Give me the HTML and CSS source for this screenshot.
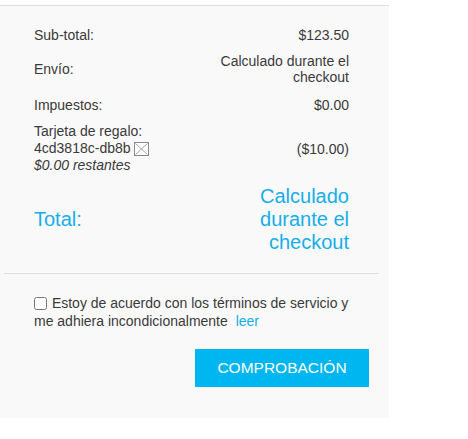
FILE: index.html
```html
<!DOCTYPE html>
<html lang="es">
<head>
<meta charset="utf-8">
<title>Resumen</title>
<link rel="stylesheet" href="styles.css">
</head>
<body>
<div class="panel">
  <div class="summary">
    <div class="row">
      <div class="label">Sub-total:</div>
      <div class="value">$123.50</div>
    </div>
    <div class="row row-tall">
      <div class="label">Envío:</div>
      <div class="value">Calculado durante el checkout</div>
    </div>
    <div class="row">
      <div class="label">Impuestos:</div>
      <div class="value">$0.00</div>
    </div>
    <div class="row">
      <div class="label gift">
        Tarjeta de regalo:<br>
        4cd3818c-db8b <span class="remove"><svg width="15" height="14" viewBox="0 0 15 14"><rect x="0.5" y="0.5" width="14" height="13" fill="#fff" stroke="#8a8a8a"/><path d="M1.5 1.5 L13.5 12.5 M13.5 1.5 L1.5 12.5" stroke="#9a9a9a" stroke-width="0.9" fill="none"/></svg></span><br>
        <em>$0.00 restantes</em>
      </div>
      <div class="value">($10.00)</div>
    </div>
    <div class="row total">
      <div class="label">Total:</div>
      <div class="value">Calculado durante el checkout</div>
    </div>
  </div>
  <hr class="divider">
  <div class="terms">
    <input type="checkbox" class="check" id="agree"> <label for="agree">Estoy de acuerdo con los términos de servicio y me adhiera incondicionalmente</label> <a href="#" class="read">leer</a>
  </div>
  <div class="actions">
    <button class="checkout">COMPROBACIÓN</button>
  </div>
</div>
</body>
</html>
```

FILE: styles.css
```css
html, body {
  margin: 0;
  padding: 0;
  background: #fff;
}
body {
  font-family: "Liberation Sans", Arial, sans-serif;
  font-size: 14px;
  color: #3a3a3a;
  padding-top: 5px;
}
.panel {
  width: 375px;
  background: #f9f9f9;
  border-top: 1px solid #dedede;
  padding: 16px 10px 31px 4px;
}
.summary {
  padding: 0 30px 14px 30px;
}
.row {
  display: flex;
  align-items: center;
  padding: 5px 0;
  line-height: 16px;
}
.row-tall {
  padding-bottom: 7px;
}
.label, .value {
  flex: 1 1 0;
}
.value {
  text-align: right;
}
.gift {
  line-height: 17px;
}
.remove {
  display: inline-block;
  vertical-align: -3px;
  line-height: 0;
}
.total {
  font-size: 20px;
  line-height: 23px;
  color: #16aeea;
  padding-top: 6px;
}
.divider {
  border: 0;
  border-top: 1px solid #dedede;
  margin: 0;
  height: 0;
}
.terms {
  padding: 20px 30px 0 30px;
  line-height: 18px;
}
.check {
  margin: 0 1px 0 0;
  width: 13px;
  height: 13px;
  vertical-align: -2px;
}
.read {
  color: #12aeea;
  text-decoration: none;
  margin-left: 4px;
}
.actions {
  display: flex;
  justify-content: flex-end;
  padding: 19px 10px 0 0;
}
.checkout {
  width: 174px;
  height: 38px;
  border: 0;
  background: #00b6f1;
  color: #fff;
  font-family: "Liberation Sans", Arial, sans-serif;
  font-size: 15.5px;
  padding: 0;
}
```
